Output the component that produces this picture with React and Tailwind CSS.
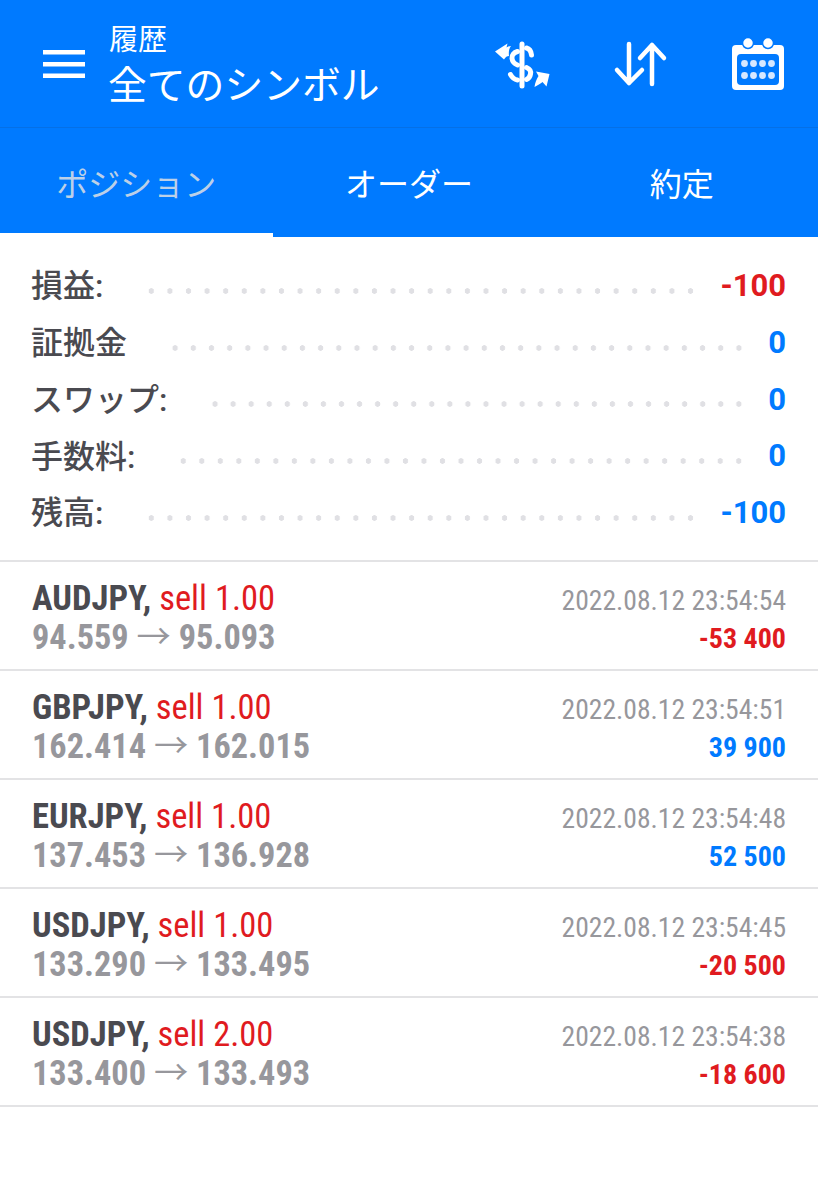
import React from "react";

const CJK = '[font-family:Roboto,"Noto_Sans_CJK_JP",sans-serif]';

const summary = [
  { label: "損益:", value: "-100", color: "text-[#e01b1f]" },
  { label: "証拠金", value: "0", color: "text-[#007aff]" },
  { label: "スワップ:", value: "0", color: "text-[#007aff]" },
  { label: "手数料:", value: "0", color: "text-[#007aff]" },
  { label: "残高:", value: "-100", color: "text-[#007aff]" },
];

const deals = [
  { symbol: "AUDJPY,", side: "sell 1.00", from: "94.559", to: "95.093", time: "2022.08.12 23:54:54", profit: "-53 400", loss: true },
  { symbol: "GBPJPY,", side: "sell 1.00", from: "162.414", to: "162.015", time: "2022.08.12 23:54:51", profit: "39 900", loss: false },
  { symbol: "EURJPY,", side: "sell 1.00", from: "137.453", to: "136.928", time: "2022.08.12 23:54:48", profit: "52 500", loss: false },
  { symbol: "USDJPY,", side: "sell 1.00", from: "133.290", to: "133.495", time: "2022.08.12 23:54:45", profit: "-20 500", loss: true },
  { symbol: "USDJPY,", side: "sell 2.00", from: "133.400", to: "133.493", time: "2022.08.12 23:54:38", profit: "-18 600", loss: true },
];

const MenuIcon = () => (
  <svg width="42" height="28" viewBox="0 0 42 28" fill="#fff">
    <rect x="0" y="0" width="42" height="4.5" />
    <rect x="0" y="12" width="42" height="4.5" />
    <rect x="0" y="23.5" width="42" height="4.5" />
  </svg>
);

const DollarIcon = () => (
  <svg width="66" height="58" viewBox="0 0 66 58" fill="none">
    <g stroke="#fff" strokeWidth="5" strokeLinecap="round">
      <path d="M32 9V51" />
      <path d="M41.500 20C41 15.500 38.500 13.500 36.500 13" />
      <path d="M27.500 16.500C24 17.500 21.500 20 22 23.500C22.500 27 25 29 27.500 30" />
      <path d="M36.500 32.500C40 34 41 36.500 40.500 39C40 42 38.500 43.500 36.500 44.500" />
      <path d="M27.500 45C24.500 44.500 22 42.500 20.500 39.500" />
    </g>
    <path d="M5 16.500L17.500 8.500L16.500 12.500C18 11.500 19.500 11 21 11C19 13.500 18.500 17 19 21C17 21 15.500 22 14 24.500Z" fill="#fff" />
    <path d="M59.500 39L46 36.500L48.500 41C46.500 44 45 48 44.500 52C47.500 50.500 50.500 48.500 52.500 47L56.500 51.500Z" fill="#fff" />
  </svg>
);

const ArrowsIcon = () => (
  <svg width="66" height="58" viewBox="0 0 66 58" fill="none" stroke="#fff" strokeWidth="4.5" strokeLinecap="round" strokeLinejoin="round">
    <path d="M19 9V48M7 35L19 48L32 35" />
    <path d="M42 49V10M30 23L42 10L54 23" />
  </svg>
);

const CalendarIcon = () => (
  <svg width="66" height="64" viewBox="0 0 66 64">
    <rect x="7" y="13" width="52" height="45" rx="4" fill="#fff" />
    <circle cx="23" cy="11" r="5.500" fill="#fff" stroke="#007aff" strokeWidth="1.500" />
    <circle cx="43" cy="11" r="5.500" fill="#fff" stroke="#007aff" strokeWidth="1.500" />
    <rect x="12" y="22" width="42" height="31" rx="4" fill="#007aff" />
    {[19.5, 28.5, 37.5, 46.5].map((x) => (
      <g key={x} fill="#d7e8ff">
        <circle cx={x} cy="31.500" r="3.400" />
        <circle cx={x} cy="43.500" r="3.400" />
      </g>
    ))}
  </svg>
);

const App = () => {
  return (
    <div className={`min-h-[1200px] w-[818px] bg-white ${CJK}`}>
      {/* Top bar */}
      <header className="flex h-[128px] items-center border-b border-[#0570e6] bg-[#007aff] pl-[43px] pr-[27px] text-white">
        <MenuIcon />
        <div className="ml-[23px] mt-[6px] flex flex-1 flex-col">
          <div className="h-[33px] pl-[1px] text-[29px] leading-[33px]">履歴</div>
          <div className="mt-[6px] h-[46px] text-[38.800px] leading-[46px]">全てのシンボル</div>
        </div>
        <div className="flex items-center">
          <DollarIcon />
          <div className="ml-[54px]">
            <ArrowsIcon />
          </div>
          <div className="ml-[49px]">
            <CalendarIcon />
          </div>
        </div>
      </header>

      {/* Tabs */}
      <nav className="grid h-[109px] grid-cols-3 bg-[#007aff] text-[32px]">
        <div className="flex items-center justify-center border-b-4 border-white pt-[8px] text-[#bcd0e8]">ポジション</div>
        <div className="flex items-center justify-center pt-[4px] text-white">オーダー</div>
        <div className="flex items-center justify-center pt-[4px] text-white">約定</div>
      </nav>

      {/* Summary */}
      <section className="flex h-[325px] flex-col border-b-2 border-[#e3e3e5] bg-white px-[32px] pt-[21px]">
        {summary.map((row) => (
          <div key={row.label} className="flex h-[56.750px] items-center">
            <span className="-ml-[1px] text-[32px] font-medium text-[#4a4a50]">{row.label}</span>
            <span className="ml-[39px] mr-[20px] mt-[9px] h-[6px] flex-1 bg-[radial-gradient(circle,#e0e0e4_2.500px,transparent_3px)] bg-[length:18.330px_6px] bg-repeat-round" />
            <span className={`text-[31px] font-bold ${row.color}`}>{row.value}</span>
          </div>
        ))}
      </section>

      {/* Deals */}
      {deals.map((d, i) => (
        <div key={i} className="flex h-[109px] justify-between border-b-2 border-[#e3e3e5] px-[32px] pt-[16px] [font-stretch:75%]">
          <div className="flex flex-col">
            <div className="h-[40px] text-[34.500px] leading-[41px]">
              <span className="font-bold text-[#4a4a50]">{d.symbol}</span>{" "}
              <span className="text-[#e01b1f]">{d.side}</span>
            </div>
            <div className="h-[38px] text-[34.300px] font-bold leading-[38px] text-[#97979c]">
              {d.from} <span className="font-normal">→</span> {d.to}
            </div>
          </div>
          <div className="flex flex-col items-end">
            <div className="h-[40px] pt-[2px] text-[27.600px] leading-[41px] text-[#97979c]">{d.time}</div>
            <div className={`h-[38px] text-[28px] font-bold leading-[42px] ${d.loss ? "text-[#e01b1f]" : "text-[#007aff]"}`}>{d.profit}</div>
          </div>
        </div>
      ))}
    </div>
  );
};

export default App;
